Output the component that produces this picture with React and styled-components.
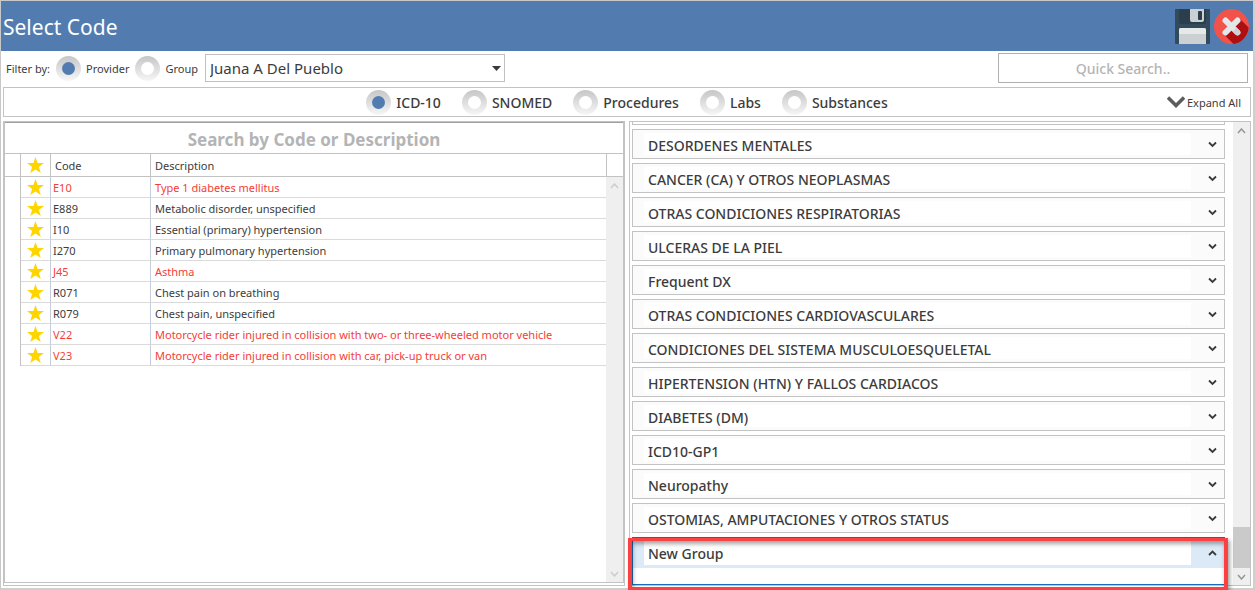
import React, { useState } from 'react';
import styled, { createGlobalStyle } from 'styled-components';

const GlobalStyle = createGlobalStyle`
  * {
    box-sizing: border-box;
  }

  body {
    margin: 0;
    background: white;
    color: #3c3c3c;
    font-family: 'Noto Sans', 'Open Sans', sans-serif;
    font-size: 11px;
  }

  button, input, select {
    font-family: inherit;
    color: inherit;
  }
`;

const Window = styled.div`
  display: flex;
  flex-direction: column;
  height: 100vh;
  border: 1px solid #c8c8c8;
  border-right: 2px solid #cfcfcf;
  border-bottom: 2px solid #cfcfcf;
`;

const TitleBar = styled.header`
  display: flex;
  align-items: center;
  justify-content: space-between;
  height: 50px;
  flex-shrink: 0;
  padding: 0 4px 0 2px;
  background: #527cb0;
  color: white;

  h1 {
    margin: 0;
    padding-top: 2px;
    font-size: 21px;
    font-weight: normal;
  }
`;

const TitleActions = styled.div`
  display: flex;
  gap: 4px;
`;

const IconButton = styled.button`
  display: flex;
  padding: 0;
  border: none;
  background: none;
  cursor: pointer;
`;

const FilterBar = styled.div`
  display: flex;
  align-items: center;
  height: 34px;
  flex-shrink: 0;
  padding: 0 5px;
`;

const FilterLabel = styled.span`
  margin-right: 6px;
`;

const RadioLabel = styled.label`
  display: flex;
  align-items: center;
  gap: 5px;
  font-size: ${(props) => (props.$large ? '14px' : '11px')};
  font-weight: ${(props) => (props.$large ? 500 : 400)};
`;

const Radio = styled.input`
  appearance: none;
  display: grid;
  place-items: center;
  width: 25px;
  height: 25px;
  margin: 0;
  border-radius: 50%;
  background: linear-gradient(#c6c6c6, #f6f6f6);

  &::before {
    content: '';
    width: 13px;
    height: 13px;
    border-radius: 50%;
    background: white;
  }

  &:checked::before {
    background: #527cb0;
  }
`;

const FilterRadios = styled.div`
  display: flex;
  gap: 6px;
  margin-right: 7px;
`;

const SelectBox = styled.div`
  position: relative;
  width: 300px;

  svg {
    position: absolute;
    right: 4px;
    top: 12px;
    pointer-events: none;
  }
`;

const Select = styled.select`
  appearance: none;
  width: 100%;
  height: 28px;
  padding: 0 20px 0 4px;
  border: 1px solid #c0c0c0;
  border-radius: 0;
  background: white;
  font-size: 15px;
`;

const QuickSearch = styled.input`
  width: 250px;
  height: 30px;
  margin-left: auto;
  border: 1px solid #b0b0b0;
  background: white;
  font-size: 14px;
  font-weight: 500;
  text-align: center;

  &::placeholder {
    color: #b4b4b4;
  }
`;

const TypeBar = styled.div`
  display: grid;
  grid-template-columns: 1fr auto 1fr;
  align-items: center;
  height: 30px;
  flex-shrink: 0;
  margin: 2px 2px 4px;
  border: 1px solid #c3c3c3;
`;

const TypeRadios = styled.div`
  display: flex;
  grid-column: 2;
  gap: 21px;
`;

const ExpandButton = styled.button`
  display: flex;
  align-items: center;
  justify-self: end;
  gap: 2px;
  padding: 0 9px;
  border: none;
  background: none;
  font-size: 11px;
`;

const Content = styled.main`
  display: grid;
  grid-template-columns: 1fr 1fr;
  gap: 4px;
  flex: 1;
  min-height: 0;
  margin: 0 2px 2px;
`;

const Panel = styled.section`
  position: relative;
  display: flex;
  min-width: 0;
  min-height: 0;
  border: 1px solid #c3c3c3;
`;

const CodePanel = styled(Panel)`
  padding-bottom: 2px;
`;

const CodeGrid = styled.div`
  display: flex;
  flex-direction: column;
  flex: 1;
  min-width: 0;
  border: 1px solid #c3c3c3;
  border-top: none;
`;

const CodeSearch = styled.input`
  width: 100%;
  height: 32px;
  padding: 2px 0 0;
  border: none;
  border-top: 1px solid #a0a0a0;
  border-bottom: 1px solid #c3c3c3;
  background: white;
  font-size: 17px;
  font-weight: 700;
  text-align: center;

  &::placeholder {
    color: #b4b4b4;
  }
`;

const TableArea = styled.div`
  position: relative;
  flex: 1;
  min-height: 0;
`;

const Table = styled.table`
  width: 100%;
  border-collapse: separate;
  border-spacing: 0;
  table-layout: fixed;
  text-align: left;

  th {
    height: 23px;
    padding: 0 4px;
    border-right: 1px solid #c3c3c3;
    border-bottom: 1px solid #c3c3c3;
    font-weight: normal;
  }

  th:last-child {
    border-right: none;
  }

  td {
    height: 21px;
    padding: 0 4px 0 2px;
    border-right: 1px solid #c3cddb;
    border-bottom: 1px solid #dadada;
    white-space: nowrap;
  }

  td:nth-child(4) {
    padding-left: 4px;
    border-right: none;
  }

  td:first-child {
    border-bottom: none;
    border-right-color: #c3c3c3;
  }

  td:last-child {
    border: none;
  }

  th svg, td svg {
    display: block;
    margin: 0 auto;
  }

  td:nth-child(2) {
    padding: 0 4px;
  }
`;

const CodeRow = styled.tr`
  color: ${(props) => (props.$alert ? '#f53d36' : 'inherit')};
`;

const ScrollTrack = styled.div`
  display: flex;
  flex-direction: column;
  align-items: center;
  width: 17px;
  flex-shrink: 0;
  background: #efefef;
  color: ${(props) => (props.$disabled ? '#cdcdcd' : '#969696')};

  svg {
    flex-shrink: 0;
    margin: 6px 0 5px;
  }
`;

/* the track starts right under the table header */
const TableScroll = styled(ScrollTrack)`
  position: absolute;
  top: 23px;
  right: 0;
  bottom: 0;
  justify-content: space-between;
`;

const Thumb = styled.div`
  width: 100%;
  height: 41px;
  margin-top: auto;
  background: #cacaca;
`;

const GroupList = styled.div`
  display: flex;
  flex-direction: column;
  justify-content: flex-end;
  flex: 1;
  gap: 4px;
  min-width: 0;
  overflow: hidden;
  padding: 0 8px 0 2px;
`;

const Group = styled.div`
  flex-shrink: 0;
  height: ${(props) => (props.$open ? '48px' : '30px')};
  border: 1px solid ${(props) => (props.$open ? '#1a6db8' : '#c3c3c3')};
`;

const GroupHeader = styled.button`
  display: flex;
  align-items: center;
  width: 100%;
  height: ${(props) => (props.$open ? '30px' : '28px')};
  padding: 3px 7px 3px 11px;
  border: none;
  background: ${(props) => (props.$open ? '#dceaf8' : '#fbfbfb')};
  font-size: 14px;
  font-weight: 500;
  text-align: left;
`;

const GroupName = styled.span`
  flex: 1;
  height: 100%;
  margin-right: 17px;
  padding-left: 4px;
  background: white;
  line-height: 26px;
`;

const Highlight = styled.div`
  position: absolute;
  left: -2px;
  right: 22px;
  bottom: -5px;
  height: 52px;
  border: 4px solid #fb4141;
  border-top-width: 3px;
  border-bottom-width: 3px;
  box-shadow: 2px 2px 4px rgba(0, 0, 0, 0.35), inset 1px 3px 4px rgba(0, 0, 0, 0.35);
  pointer-events: none;
`;

const codes = [
  { code: 'E10', description: 'Type 1 diabetes mellitus', alert: true },
  { code: 'E889', description: 'Metabolic disorder, unspecified' },
  { code: 'I10', description: 'Essential (primary) hypertension' },
  { code: 'I270', description: 'Primary pulmonary hypertension' },
  { code: 'J45', description: 'Asthma', alert: true },
  { code: 'R071', description: 'Chest pain on breathing' },
  { code: 'R079', description: 'Chest pain, unspecified' },
  { code: 'V22', description: 'Motorcycle rider injured in collision with two- or three-wheeled motor vehicle', alert: true },
  { code: 'V23', description: 'Motorcycle rider injured in collision with car, pick-up truck or van', alert: true },
];

const groups = [
  'DESORDENES MENTALES',
  'CANCER (CA) Y OTROS NEOPLASMAS',
  'OTRAS CONDICIONES RESPIRATORIAS',
  'ULCERAS DE LA PIEL',
  'Frequent DX',
  'OTRAS CONDICIONES CARDIOVASCULARES',
  'CONDICIONES DEL SISTEMA MUSCULOESQUELETAL',
  'HIPERTENSION (HTN) Y FALLOS CARDIACOS',
  'DIABETES (DM)',
  'ICD10-GP1',
  'Neuropathy',
  'OSTOMIAS, AMPUTACIONES Y OTROS STATUS',
  'New Group',
];

const codeTypes = ['ICD-10', 'SNOMED', 'Procedures', 'Labs', 'Substances'];

const SaveIcon = () => (
  <svg width="35" height="35" viewBox="0 0 35 35">
    <rect width="35" height="35" rx="1" fill="#324a5a" />
    <path d="M4 0h27v13a2 2 0 0 1-2 2H6a2 2 0 0 1-2-2z" fill="#2b3e4d" />
    <path d="M15 0h14v11a2 2 0 0 1-2 2H17a2 2 0 0 1-2-2z" fill="#cbd0d3" />
    <rect x="23" y="2" width="4" height="9" rx="1" fill="#2b3e4d" />
    <path d="M4 35V21a2 2 0 0 1 2-2h23a2 2 0 0 1 2 2v14z" fill="#cbd0d3" />
    <path d="M4 25v-4a2 2 0 0 1 2-2h23a2 2 0 0 1 2 2v4z" fill="#e6e9ea" />
  </svg>
);

const CloseIcon = () => (
  <svg width="35" height="35" viewBox="0 0 35 35">
    <circle cx="17.5" cy="17.5" r="17.5" fill="#f1534b" />
    <path d="M26 10l8.600 8.600A17.500 17.500 0 0 1 19.500 34.900L9 24.500z" fill="#ae0f10" />
    <path d="M11.500 11.500l12 12M23.500 11.500l-12 12" stroke="#e4e7ea" strokeWidth="6" strokeLinecap="round" />
    <path d="M18.500 22.500l3 3a2.900 2.900 0 0 0 4-4l-3-3z" fill="#cdd1d5" />
  </svg>
);

const StarIcon = () => (
  <svg width="17" height="16" viewBox="0 0 17 16">
    <path d="M8.500 0l2.100 5.900 6.400.1-5.100 3.900 1.900 6.100-5.300-3.600L3.200 16l1.900-6.100L0 6l6.400-.1z" fill="#ffd500" />
  </svg>
);

const ChevronIcon = ({ up }) => (
  <svg width="9" height="8" viewBox="0 0 9 8" fill="none" stroke="#3a3a3a" strokeWidth="1.800">
    <path d={up ? 'M1 6l3.500-3.500L8 6' : 'M1 2.500L4.500 6 8 2.500'} />
  </svg>
);

const ArrowIcon = ({ up }) => (
  <svg width="9" height="6" viewBox="0 0 9 6" fill="none" stroke="currentColor" strokeWidth="1.500">
    <path d={up ? 'M1 5l3.500-4L8 5' : 'M1 1l3.500 4L8 1'} />
  </svg>
);

const App = () => {
  const [filterBy, setFilterBy] = useState('Provider');
  const [codeType, setCodeType] = useState('ICD-10');
  const [openGroup, setOpenGroup] = useState('New Group');

  return (
    <>
      <GlobalStyle />
      <Window>
        <TitleBar>
          <h1>Select Code</h1>
          <TitleActions>
            <IconButton type="button" aria-label="Save"><SaveIcon /></IconButton>
            <IconButton type="button" aria-label="Close"><CloseIcon /></IconButton>
          </TitleActions>
        </TitleBar>

        <FilterBar>
          <FilterLabel>Filter by:</FilterLabel>
          <FilterRadios>
            {['Provider', 'Group'].map((name) => (
              <RadioLabel key={name}>
                <Radio
                  type="radio"
                  name="filterBy"
                  checked={filterBy === name}
                  onChange={() => setFilterBy(name)}
                />
                {name}
              </RadioLabel>
            ))}
          </FilterRadios>
          <SelectBox>
            <Select aria-label="Provider">
              <option>Juana A Del Pueblo</option>
            </Select>
            <svg width="9" height="5" viewBox="0 0 9 5">
              <path d="M0 0h9L4.500 5z" fill="#3a3a3a" />
            </svg>
          </SelectBox>
          <QuickSearch type="text" placeholder="Quick Search.." aria-label="Quick Search" />
        </FilterBar>

        <TypeBar>
          <TypeRadios>
            {codeTypes.map((name) => (
              <RadioLabel key={name} $large>
                <Radio
                  type="radio"
                  name="codeType"
                  checked={codeType === name}
                  onChange={() => setCodeType(name)}
                />
                {name}
              </RadioLabel>
            ))}
          </TypeRadios>
          <ExpandButton type="button">
            <svg width="18" height="12" viewBox="0 0 18 12" fill="none" stroke="#5c5c5c" strokeWidth="3.500">
              <path d="M1 1.500l8 8 8-8" />
            </svg>
            Expand All
          </ExpandButton>
        </TypeBar>

        <Content>
          <CodePanel>
            <CodeGrid>
              <CodeSearch
                type="text"
                placeholder="Search by Code or Description"
                aria-label="Search by Code or Description"
              />
              <TableArea>
                <Table>
                  <colgroup>
                    <col width="16" />
                    <col width="30" />
                    <col width="100" />
                    <col />
                    <col width="16" />
                  </colgroup>
                  <thead>
                    <tr>
                      <th />
                      <th><StarIcon /></th>
                      <th>Code</th>
                      <th>Description</th>
                      <th />
                    </tr>
                  </thead>
                  <tbody>
                    {codes.map((item) => (
                      <CodeRow key={item.code} $alert={item.alert}>
                        <td />
                        <td><StarIcon /></td>
                        <td>{item.code}</td>
                        <td>{item.description}</td>
                        <td />
                      </CodeRow>
                    ))}
                  </tbody>
                </Table>
                <TableScroll $disabled>
                  <ArrowIcon up />
                  <ArrowIcon />
                </TableScroll>
              </TableArea>
            </CodeGrid>
          </CodePanel>

          <Panel>
            <GroupList>
              {/* group scrolled past the top edge */}
              <Group />
              {groups.map((name) => (
                <Group key={name} $open={openGroup === name}>
                  <GroupHeader
                    type="button"
                    $open={openGroup === name}
                    aria-expanded={openGroup === name}
                    onClick={() => setOpenGroup(openGroup === name ? '' : name)}
                  >
                    <GroupName>{name}</GroupName>
                    <ChevronIcon up={openGroup === name} />
                  </GroupHeader>
                </Group>
              ))}
            </GroupList>
            <ScrollTrack>
              <ArrowIcon up />
              <Thumb />
              <ArrowIcon />
            </ScrollTrack>
            <Highlight />
          </Panel>
        </Content>
      </Window>
    </>
  );
};

export default App;
